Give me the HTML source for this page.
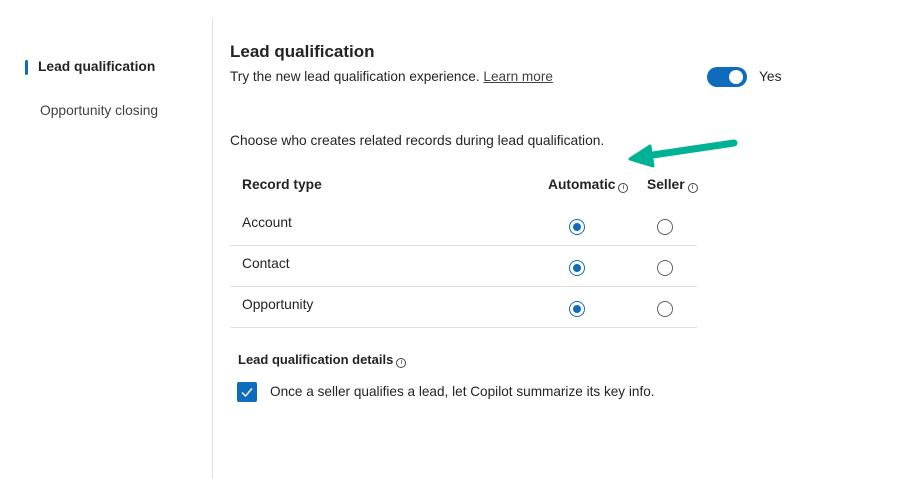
<!DOCTYPE html>
<html><head><meta charset="utf-8"><style>
*{margin:0;padding:0;box-sizing:border-box}
body{width:919px;height:479px;background:#fff;font-family:"Segoe UI","Liberation Sans",sans-serif;color:#242424;position:relative;overflow:hidden;font-size:13.8px}
.a{position:absolute;white-space:nowrap}
.line{position:absolute;left:230px;width:467px;height:1px;background:#e0e0e0}
.r{position:absolute;width:16px;height:16px;border-radius:50%;border:1px solid #616161;background:#fff}
.r.on{border-color:#0f6cbd}
.r.on::after{content:"";position:absolute;left:3px;top:3px;width:8px;height:8px;border-radius:50%;background:#0f6cbd}
.i{display:inline-block;width:10px;height:10px;border:1px solid #444;border-radius:50%;font-size:7px;line-height:8px;text-align:center;vertical-align:0px;margin-left:3px;font-weight:normal}
</style></head><body>
<div class="a" style="left:212px;top:18px;width:1px;height:461px;background:#e0e0e0"></div>
<div class="a" style="left:25px;top:60px;width:3px;height:15px;background:#0f6cbd;border-radius:2px"></div>
<div class="a" style="left:38px;top:59px;font-size:13.8px;font-weight:600">Lead qualification</div>
<div class="a" style="left:40px;top:103px;color:#424242">Opportunity closing</div>
<div class="a" style="left:230px;top:42px;font-size:17px;font-weight:600">Lead qualification</div>
<div class="a" style="left:230px;top:69px;font-size:13.6px">Try the new lead qualification experience. <span style="text-decoration:underline;color:#424242">Learn more</span></div>
<div class="a" style="left:707px;top:67px;width:40px;height:20px;border-radius:10px;background:#0f6cbd"><div style="position:absolute;right:4px;top:3px;width:14px;height:14px;border-radius:50%;background:#fff"></div></div>
<div class="a" style="left:759px;top:69px">Yes</div>
<div class="a" style="left:230px;top:133px">Choose who creates related records during lead qualification.</div>
<svg class="a" style="left:624px;top:134px" width="120" height="40"><path d="M110 9 L22 22" stroke="#00b294" stroke-width="7" stroke-linecap="round" fill="none"/><path d="M6 25 L26 12 L29 32 Z" fill="#00b294" stroke="#00b294" stroke-width="3" stroke-linejoin="round"/></svg>
<div class="a" style="left:242px;top:177px;font-weight:600">Record type</div>
<div class="a" style="left:548px;top:177px;font-weight:600">Automatic<span class="i">i</span></div>
<div class="a" style="left:647px;top:177px;font-weight:600">Seller<span class="i">i</span></div>
<div class="a" style="left:242px;top:215px">Account</div>
<div class="a" style="left:242px;top:256px">Contact</div>
<div class="a" style="left:242px;top:297px">Opportunity</div>
<div class="line" style="top:245px"></div><div class="line" style="top:286px"></div><div class="line" style="top:327px"></div>
<div class="r on" style="left:569px;top:219px"></div><div class="r" style="left:657px;top:219px"></div>
<div class="r on" style="left:569px;top:260px"></div><div class="r" style="left:657px;top:260px"></div>
<div class="r on" style="left:569px;top:301px"></div><div class="r" style="left:657px;top:301px"></div>
<div class="a" style="left:238px;top:352px;font-size:13px;font-weight:600">Lead qualification details<span class="i">i</span></div>
<div class="a" style="left:237px;top:382px;width:20px;height:20px;background:#0f6cbd;border-radius:2px"><svg width="20" height="20"><path d="M5 10.5 L8.5 14 L15 6.5" stroke="#fff" stroke-width="1.4" fill="none"/></svg></div>
<div class="a" style="left:270px;top:384px;font-size:13.6px">Once a seller qualifies a lead, let Copilot summarize its key info.</div>
</body></html>
